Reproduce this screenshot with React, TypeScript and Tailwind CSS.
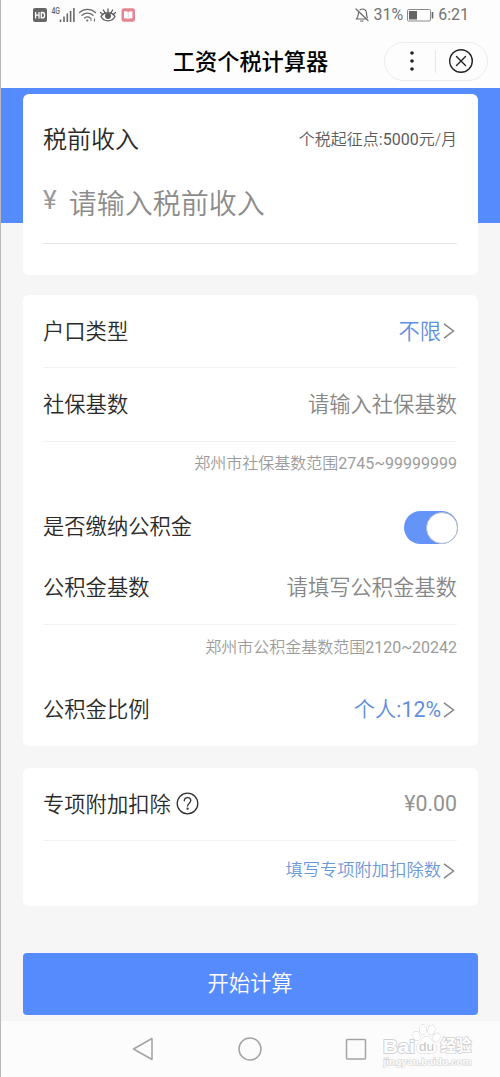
import { useState, type ReactNode } from "react";

const LINE = "h-px w-full bg-[#f2f2f2]";

function StatusBar() {
  return (
    <div className="flex h-[29px] items-center justify-between pr-[31px] pl-[31px] text-[16px] font-normal text-[#727272]">
      <div className="flex">
        {/* HD */}
        <svg width="17" height="20" viewBox="32 4 17 20">
          <rect x="33" y="7" width="14" height="14" rx="2" fill="#666" />
          <path d="M35.6 11v6.4M39 11v6.4M35.6 14.2H39M41.3 11.5v5.4h1c1.500 0 2.300-1 2.300-2.700s-.8-2.700-2.300-2.700z" fill="none" stroke="#fff" strokeWidth="1.300" />
        </svg>
        {/* 信号 */}
        <svg width="28" height="20" viewBox="49 4 28 20">
          <text x="51.500" y="13" fontSize="9" fontWeight="500" fontFamily="Roboto, sans-serif" fill="#666" textLength="8.500" lengthAdjust="spacingAndGlyphs">4G</text>
          <path d="M60.500 18.500v2.500M64 15.500V21M67.300 12.500V21M70.600 10V21M73.900 7V21" stroke="#6a6a6a" strokeWidth="1.600" />
        </svg>
        {/* Wi-Fi */}
        <svg width="22" height="20" viewBox="77 4 22 20" fill="none" stroke="#6a6a6a" strokeWidth="1.300" strokeLinecap="round">
          <path d="M79.500 11.500c4.500-4.300 11.500-4.300 16 0M82 14.300c3.200-2.900 7.800-2.900 11 0M84.700 17c1.700-1.400 3.900-1.400 5.600 0" />
          <circle cx="87.300" cy="19.500" r="1.100" fill="#6a6a6a" stroke="none" />
          <path d="M91 17.500v2M94.500 18v2.200" strokeWidth="1" />
        </svg>
        {/* 护眼模式 */}
        <svg width="20" height="20" viewBox="99 4 20 20" fill="none" stroke="#5c5c5c" strokeWidth="1.300" strokeLinecap="round">
          <path d="M101 15.500c3-5 11-5 14 0-3 5.700-11 5.700-14 0zM108 8v3M103.300 9l1.500 2.400M112.700 9l-1.500 2.400M100.500 11.500l2 1.700M115.500 11.500l-2 1.700" />
          <circle cx="108" cy="15" r="2.300" fill="#5c5c5c" />
        </svg>
        <svg width="20" height="20" viewBox="119 4 20 20">
          <rect x="121.500" y="7.300" width="13.500" height="13.500" rx="2.500" fill="#e58492" />
          <path d="M124 10.500c1.700-.4 3-.2 4.200.5 1.200-.7 2.600-.9 4.200-.5v7c-1.600-.4-3-.2-4.200.5-1.200-.7-2.500-.9-4.200-.5z" fill="#fff" />
          <path d="M128.200 11v7" stroke="#f3c9cf" strokeWidth=".8" />
        </svg>
      </div>
      <div className="flex items-center">
        <svg width="16" height="20" viewBox="357 4 16 20" fill="none" stroke="#686868" strokeWidth="1.200" strokeLinecap="round" strokeLinejoin="round">
          <path d="M359 8l12 11.500M361.500 11.500c-.5 3 0 4.500-2.200 6.500h9M363 8.800c3.500-2 6.500.2 6.500 3.400 0 2 .2 3.500.9 4.500M363.500 20h2.500" />
        </svg>
        <span className="ml-[3px]">31%</span>
        <svg className="ml-[3px]" width="28" height="20" viewBox="407 4 28 20">
          <rect x="408.500" y="8.500" width="23" height="11.500" rx="1" fill="none" stroke="#8a8a8a" />
          <rect x="410" y="10" width="8" height="8.500" fill="#666" />
          <path d="M433.500 11v6.500" stroke="#666" strokeWidth="1.600" />
        </svg>
        <span className="ml-[4px]">6:21</span>
      </div>
    </div>
  );
}

function TitleBar() {
  return (
    <header className="grid h-[59px] grid-cols-[1fr_auto_1fr] items-center pt-[5px]">
      <span />
      <h1 className="pt-[2px] text-[22.200px] font-medium text-black">工资个税计算器</h1>
      <div className="mr-[12px] flex h-[39px] w-[104px] items-center justify-self-end rounded-full border border-[#ececec]">
        <svg className="ml-[20px]" width="14" height="26" viewBox="0 0 14 26" fill="#222">
          <circle cx="7" cy="5" r="1.800" />
          <circle cx="7" cy="13" r="1.800" />
          <circle cx="7" cy="21" r="1.800" />
        </svg>
        <span className="ml-[16px] h-[23px] w-px bg-[#e8e8e8]" />
        <svg className="ml-[12px]" width="26" height="26" viewBox="0 0 26 26" fill="none" stroke="#222" strokeLinecap="round">
          <circle cx="13" cy="13" r="11.300" strokeWidth="1.400" />
          <path d="M8.500 8.500l9 9M17.500 8.500l-9 9" strokeWidth="1.400" />
        </svg>
      </div>
    </header>
  );
}

function Arrow() {
  return (
    <svg className="mr-[2px] ml-[2px]" width="12" height="18" viewBox="0 0 12 18" fill="none" stroke="#858585" strokeWidth="1.500">
      <path d="M1 1.800l9.500 7.200L1 16.200" />
    </svg>
  );
}

// 数字比汉字略粗
function Num({ children }: { children: ReactNode }) {
  return <span className="font-normal">{children}</span>;
}

function Row({ label, className, children }: { label: string; className: string; children: ReactNode }) {
  return (
    <div className={`flex items-center justify-between ${className}`}>
      <span className="text-[#2a2a2a]">{label}</span>
      {children}
    </div>
  );
}

function Watermark() {
  return (
    <svg className="absolute top-0 right-[20px] overflow-visible" width="104" height="50" viewBox="376 1019 104 50" fontFamily="'Liberation Sans', 'Noto Sans CJK SC', sans-serif" fontWeight="700" fill="#fff" stroke="#d2d2d2" strokeWidth="1" paintOrder="stroke">
      <text x="383" y="1050.500" fontSize="19" strokeWidth="1.800" textLength="32" lengthAdjust="spacingAndGlyphs">Bai</text>
      <ellipse cx="416.500" cy="1034" rx="3.300" ry="4.600" transform="rotate(-15 416.500 1034)" />
      <ellipse cx="423" cy="1027.500" rx="3.400" ry="4.800" />
      <ellipse cx="431.500" cy="1028" rx="3.400" ry="4.800" transform="rotate(12 431.500 1028)" />
      <ellipse cx="436.500" cy="1035.500" rx="3.300" ry="4.400" transform="rotate(25 436.500 1035.500)" />
      <path d="M426.500 1034.500c3.500 0 4.500 3.500 7 6 2.500 2.300 4 4.500 2.800 7.800-1.500 4-6 2.700-9.800 2.700s-8 1.200-9.600-2.700c-1.300-3.300.4-5.500 2.800-7.800 2.500-2.500 3.300-6 6.800-6z" />
      <text x="419" y="1048.500" fontSize="12.500" fontWeight="400" fill="#c4c4c4" stroke="none" textLength="15" lengthAdjust="spacingAndGlyphs">du</text>
      <text x="440.500" y="1049" fontSize="15.500" strokeWidth="1.600" textLength="31" lengthAdjust="spacingAndGlyphs">经验</text>
      <text x="383.500" y="1063" fontSize="9.500" strokeWidth="1.200" textLength="88" lengthAdjust="spacingAndGlyphs">jingyan.baidu.com</text>
    </svg>
  );
}

export default function App() {
  const [hasFund, setHasFund] = useState(true);

  return (
    <div className="flex h-[1077px] w-[500px] flex-col border-l border-[#b9b9b9] bg-[#fdfdfd] font-[Roboto,'Noto_Sans_CJK_SC',sans-serif] text-[21.300px] leading-none font-[350]">
      <StatusBar />
      <TitleBar />

      <main className="h-[933px] bg-[#f6f6f6] bg-[linear-gradient(#568bfd_135px,transparent_135px)] pt-[6px] pr-[22.500px] pl-[21.500px]">
        <section className="h-[181px] rounded-[6px] bg-white px-[20.500px]">
          <div className="flex h-[91px] items-center justify-between pt-[1px]">
            <h2 className="text-[24px] text-[#2a2a2a]">税前收入</h2>
            <span className="text-[16px] text-[#5c5c5c]">个税起征点<Num>:5000</Num>元/月</span>
          </div>
          <div className="flex h-[58px] items-start pt-[5px] text-[28px]">
            <span className="mt-[-3px] text-[26px] font-normal text-[#999]">¥</span>
            <input
              placeholder="请输入税前收入"
              className="ml-[12px] h-[30px] w-[340px] bg-transparent leading-[30px] outline-none placeholder:text-[#8c8c8c]"
            />
          </div>
          <div className="h-px bg-[#e6e6e6]" />
        </section>

        <section className="mt-[20px] h-[451px] rounded-[6px] bg-white px-[20.500px]">
          <Row label="户口类型" className="h-[72px] pt-[1px]">
            <span className="flex items-center text-[#5f8fdc]">不限<Arrow /></span>
          </Row>
          <div className={LINE} />
          <Row label="社保基数" className="h-[73px] pt-[1px]">
            <span className="text-[#868686]">请输入社保基数</span>
          </Row>
          <div className={LINE} />
          <p className="flex h-[43px] items-center justify-end pt-[1px] text-[16px] text-[#9c9c9c]">郑州市社保基数范围<Num>2745~99999999</Num></p>
          <Row label="是否缴纳公积金" className="h-[83px] pt-[1px]">
            <button
              role="switch"
              aria-checked={hasFund}
              aria-label="是否缴纳公积金"
              onClick={() => setHasFund(!hasFund)}
              className={`mt-[1px] mr-[-1px] flex h-[33px] w-[54px] items-center rounded-full ${hasFund ? "justify-end bg-[#6594f8]" : "justify-start bg-[#ddd]"}`}
            >
              <span className="size-[32px] rounded-full border border-[#b5bccb] bg-white" />
            </button>
          </Row>
          <Row label="公积金基数" className="h-[38px] pt-[2px]">
            <span className="text-[#868686]">请填写公积金基数</span>
          </Row>
          <div className="mt-[18px] h-px bg-[#f2f2f2]" />
          <p className="flex h-[44px] items-center justify-end pt-[1px] text-[16px] text-[#9c9c9c]">郑州市公积金基数范围<Num>2120~20242</Num></p>
          <Row label="公积金比例" className="h-[77px] pt-[5px]">
            <span className="flex items-center text-[#5f8fdc]">个人<Num>:12%</Num><Arrow /></span>
          </Row>
        </section>

        <section className="mt-[22px] h-[138px] rounded-[6px] bg-white px-[20.500px]">
          <div className="flex h-[72px] items-center">
            <span className="pt-[1px] text-[#2a2a2a]">专项附加扣除</span>
            <svg className="mt-[-1px] ml-[5px]" width="23" height="23" viewBox="0 0 23 23" fill="none" stroke="#333" strokeWidth="1.300" strokeLinecap="round">
              <circle cx="11.500" cy="11.500" r="10.300" />
              <path d="M8.300 8.800c0-2 1.400-3.200 3.300-3.200 1.800 0 3.200 1.200 3.200 2.900 0 2.600-3.200 2.700-3.200 5.500" />
              <circle cx="11.600" cy="16.700" r=".5" fill="#333" />
            </svg>
            <span className="ml-auto font-normal text-[#929292]">¥0.00</span>
          </div>
          <div className={LINE} />
          <a className="flex h-[58px] items-center justify-end pt-[1px] text-[17.300px] text-[#6a98d8]">填写专项附加扣除数<Arrow /></a>
        </section>

        <button className="mt-[47px] h-[62px] w-full rounded-[4px] bg-[#568bfd] text-white">开始计算</button>
      </main>

      <nav className="relative h-[56px] bg-[#fcfcfc]">
        <div className="flex h-full items-center justify-center gap-[82px] pr-[2px]">
          <svg width="24" height="26" viewBox="0 0 24 26" fill="none" stroke="#a3a3a3" strokeWidth="1.500" strokeLinejoin="round">
            <path d="M21 2.500v21L2.500 13z" />
          </svg>
          <svg width="26" height="26" viewBox="0 0 26 26" fill="none" stroke="#a3a3a3" strokeWidth="1.500">
            <circle cx="13" cy="13" r="11" />
          </svg>
          <svg width="24" height="26" viewBox="0 0 24 26" fill="none" stroke="#a3a3a3" strokeWidth="1.500">
            <rect x="1.500" y="3.500" width="19" height="19.500" rx="1" />
          </svg>
        </div>
        <Watermark />
      </nav>
    </div>
  );
}
